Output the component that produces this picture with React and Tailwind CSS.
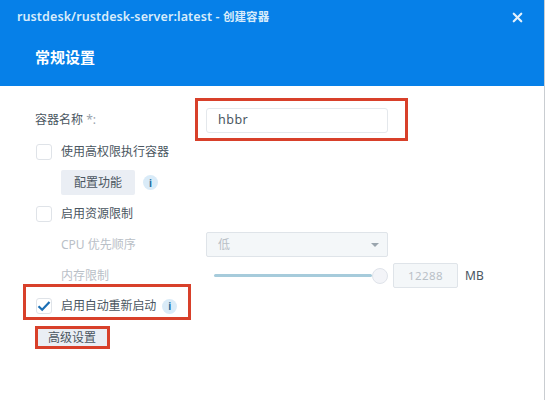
import React from "react";
import { X } from "lucide-react";

const font = "font-['Noto_Sans','Noto_Sans_CJK_SC',sans-serif]";

const Checkbox = ({ checked }) => (
  <span className="flex h-4 w-4 shrink-0 items-center justify-center rounded-[3px] border border-[#dfe3e8] bg-white">
    {checked && (
      <svg width="14" height="12" viewBox="0 0 14 12" fill="none">
        <path d="M1.5 6.2 5.2 9.8 12.5 2" stroke="#1b6fb5" strokeWidth="2.2" />
      </svg>
    )}
  </span>
);

const InfoIcon = () => (
  <span className="flex h-[15px] w-[15px] shrink-0 items-center justify-center rounded-full bg-[#d9ebf8] text-[10px] font-bold leading-none text-[#1f6f9e]">
    i
  </span>
);

const Annotation = ({ className }) => (
  <div className={`pointer-events-none absolute border-[3px] border-[#d8402a] ${className}`} />
);

export default function App() {
  return (
    <div className={`relative h-[400px] w-[548px] overflow-hidden bg-white ${font}`}>
      <div className="h-full w-[545px] border-r border-[#c9cdd1] bg-white">
        {/* Header */}
        <div className="h-[86px] bg-[#0680e8] pl-[17px] pr-[19px] pt-[8px] text-white">
          <div className="flex h-[18px] items-center justify-between">
            <span className="text-[12.5px] font-semibold tracking-[0.1px] text-[#d8ecfb]">
              rustdesk/rustdesk-server:latest - <span className="text-[11.5px]">创建容器</span>
            </span>
            <X size={15} strokeWidth={3.5} className="text-[#e3f1fc]" />
          </div>
          <div className="ml-[18px] mt-[21px] text-[15px] font-semibold leading-5">常规设置</div>
        </div>

        {/* Form */}
        <div className="pl-[36px] text-xs text-[#4a5661]">
          <div className="mt-[22px] flex h-[25px] items-center">
            <span className="-ml-px w-[171px] -translate-y-px">
              容器名称 <span className="text-[#9aa4ad]">*:</span>
            </span>
            <div className="flex h-[25px] w-[182px] items-center rounded-[3px] border border-[#e4e8ec] bg-white pl-[11px] text-[12.5px] tracking-[0.5px] text-[#4a5661]">
              hbbr
            </div>
          </div>

          <div className="mt-[11px] flex h-4 items-center gap-[9px]">
            <Checkbox />
            <span>使用高权限执行容器</span>
          </div>

          <div className="ml-[25px] mt-[10px] flex items-center gap-2">
            <button className="h-[25px] w-[74px] rounded-[2px] bg-[#eaeef4] text-xs text-[#4a5661]">配置功能</button>
            <InfoIcon />
          </div>

          <div className="mt-[11px] flex h-4 items-center gap-[9px]">
            <Checkbox />
            <span>启用资源限制</span>
          </div>

          <div className="mt-[10px] flex h-[25px] items-center pl-[25px] text-[#b9c0c7]">
            <span className="w-[145px]">CPU 优先顺序</span>
            <div className="flex h-[25px] w-[182px] items-center justify-between rounded-[2px] border border-[#dfe4e9] bg-[#f4f7f9] pl-[11px] pr-[8px]">
              <span>低</span>
              <span className="h-0 w-0 border-x-[4px] border-t-[4px] border-x-transparent border-t-[#9aa5ae]" />
            </div>
          </div>

          <div className="mt-[6px] flex h-[25px] items-center pl-[25px] text-[#b9c0c7]">
            <span className="w-[153px]">内存限制</span>
            <div className="flex w-[174px] items-center">
              <div className="h-[3px] flex-1 rounded-full bg-[#a6cbdb]" />
              <div className="h-4 w-4 shrink-0 rounded-full border border-[#dfe3ea] bg-[#f3f4f8]" />
            </div>
            <div className="ml-[5px] flex h-[25px] w-[65px] items-center justify-center rounded-[2px] border border-[#dfe4e9] bg-[#f4f7f9] text-[11.5px] tracking-[0.4px]">
              12288
            </div>
            <span className="ml-[7px] text-xs text-[#4a5661]">MB</span>
          </div>

          <div className="mt-[10px] flex h-4 items-center gap-[9px]">
            <Checkbox checked />
            <span className="-mr-[3px] tracking-[-0.1px]">启用自动重新启动</span>
            <InfoIcon />
          </div>

          <button className="mt-[14px] flex h-[20px] w-[72px] items-center justify-center bg-[#eaeef4] text-xs text-[#4a5661]">
            高级设置
          </button>
        </div>
      </div>

      {/* Red annotation boxes */}
      <Annotation className="left-[195px] top-[98px] h-[43px] w-[213px]" />
      <Annotation className="left-[23px] top-[284px] h-[36px] w-[168px]" />
      <Annotation className="left-[35px] top-[326px] h-[23px] w-[75px]" />
    </div>
  );
}
